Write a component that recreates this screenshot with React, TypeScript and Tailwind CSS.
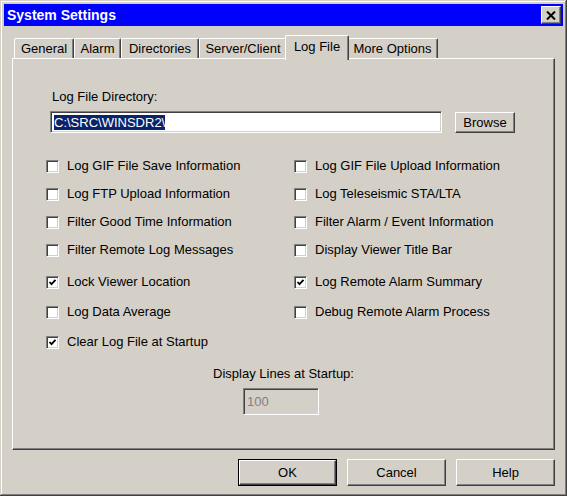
const raised =
  "border border-t-white border-l-white border-r-[#404040] border-b-[#404040] shadow-[inset_-1px_-1px_0_#808080]";
const sunken =
  "border border-t-[#808080] border-l-[#808080] border-r-white border-b-white shadow-[inset_1px_1px_0_#404040,inset_-1px_-1px_0_#d4d0c8]";

const tabs = [
  { name: "General", w: "w-[60px]" },
  { name: "Alarm", w: "w-[47px]" },
  { name: "Directories", w: "w-[78px]" },
  { name: "Server/Client", w: "w-[88px]" },
  { name: "Log File", w: "w-[64px]", active: true },
  { name: "More Options", w: "w-[91px]" },
];

const rows: { left: [string, boolean]; right?: [string, boolean]; mt: string }[] = [
  { left: ["Log GIF File Save Information", false], right: ["Log GIF File Upload Information", false], mt: "mt-[25px]" },
  { left: ["Log FTP Upload Information", false], right: ["Log Teleseismic STA/LTA", false], mt: "mt-[12px]" },
  { left: ["Filter Good Time Information", false], right: ["Filter Alarm / Event Information", false], mt: "mt-[12px]" },
  { left: ["Filter Remote Log Messages", false], right: ["Display Viewer Title Bar", false], mt: "mt-[12px]" },
  { left: ["Lock Viewer Location", true], right: ["Log Remote Alarm Summary", true], mt: "mt-[16px]" },
  { left: ["Log Data Average", false], right: ["Debug Remote Alarm Process", false], mt: "mt-[14px]" },
  { left: ["Clear Log File at Startup", true], mt: "mt-[14px]" },
];

function Check({ label, checked }: { label: string; checked: boolean }) {
  return (
    <div className="flex items-center h-[16px]">
      <span className={`w-[13px] h-[13px] bg-white flex items-center justify-center ${sunken}`}>
        {checked && (
          <svg width="11" height="11" viewBox="0 0 11 11">
            <polyline points="2.5,5 4.5,7.2 8.5,2.8" fill="none" stroke="#000" strokeWidth="1.8" />
          </svg>
        )}
      </span>
      <span className="ml-[8px] whitespace-nowrap">{label}</span>
    </div>
  );
}

function Button({ label, isDefault }: { label: string; isDefault?: boolean }) {
  return (
    <div className={`w-[99px] h-[27px] ${isDefault ? "border border-black" : ""}`}>
      <button className={`w-full h-full flex items-center justify-center bg-[#d4d0c8] ${raised}`}>
        {label}
      </button>
    </div>
  );
}

export default function App() {
  return (
    <div className="w-[567px] h-[496px] bg-[#d4d0c8] p-[4px] flex flex-col text-[13px] text-black font-['Liberation_Sans',Arial,sans-serif] shadow-[inset_-1px_-1px_0_#404040,inset_1px_1px_0_#d4d0c8,inset_-2px_-2px_0_#808080,inset_2px_2px_0_#ffffff]">
      {/* Title bar */}
      <div className="h-[22px] bg-[#0000ff] flex items-center justify-between pl-[3px] pr-[2px]">
        <span className="text-white font-bold text-[14px]">System Settings</span>
        <button className={`w-[20px] h-[18px] bg-[#d4d0c8] flex items-center justify-center ${raised}`}>
          <svg width="10" height="9" viewBox="0 0 10 9">
            <path d="M1 0.5 L9 8.5 M9 0.5 L1 8.5" stroke="#000" strokeWidth="2" />
          </svg>
        </button>
      </div>

      <div className="flex-1 flex flex-col px-[8px]">
        {/* Tabs */}
        <div className="flex items-end h-[23px] mt-[9px] pl-[2px]">
          {tabs.map((t) =>
            t.active ? (
              <div
                key={t.name}
                className={`${t.w} -mx-[2px] h-[25px] -mb-[2px] relative z-10 bg-[#d4d0c8] border-t border-l border-white border-r border-r-[#404040] shadow-[inset_-1px_0_0_#808080] rounded-t-[2px] flex items-center justify-center pb-[3px]`}
              >
                {t.name}
              </div>
            ) : (
              <div
                key={t.name}
                className={`${t.w} h-[20px] bg-[#d4d0c8] border-t border-l border-white border-r border-r-[#404040] shadow-[inset_-1px_0_0_#808080] rounded-t-[2px] flex items-center justify-center`}
              >
                {t.name}
              </div>
            )
          )}
        </div>

        {/* Panel */}
        <div className={`h-[392px] flex flex-col pt-[30px] ${raised}`}>
          <div className="ml-[39px] h-[16px] leading-[16px]">Log File Directory:</div>
          <div className="flex items-start mt-[6px] ml-[37px]">
            <div className={`w-[392px] h-[22px] bg-white flex items-center px-[3px] ${sunken}`}>
              <span className="bg-[#0a246a] text-white leading-[15px]">C:\SRC\WINSDR2\</span>
            </div>
            <button className={`ml-[13px] mt-[1px] w-[60px] h-[21px] bg-[#d4d0c8] flex items-center justify-center ${raised}`}>
              Browse
            </button>
          </div>

          <div className="ml-[33px] flex flex-col">
            {rows.map((r) => (
              <div key={r.left[0]} className={`flex ${r.mt}`}>
                <div className="w-[248px]">
                  <Check label={r.left[0]} checked={r.left[1]} />
                </div>
                {r.right && <Check label={r.right[0]} checked={r.right[1]} />}
              </div>
            ))}
          </div>

          <div className="flex flex-col items-center mt-[16px]">
            <div className="h-[16px] leading-[16px]">Display Lines at Startup:</div>
            <div className={`mt-[6px] mr-[5px] w-[76px] h-[27px] bg-[#d4d0c8] text-[#808080] flex items-center px-[3px] ${sunken}`}>
              100
            </div>
          </div>
        </div>

        {/* Buttons */}
        <div className="flex justify-end gap-[10px] mt-[9px]">
          <Button label="OK" isDefault />
          <Button label="Cancel" />
          <Button label="Help" />
        </div>
      </div>
    </div>
  );
}
